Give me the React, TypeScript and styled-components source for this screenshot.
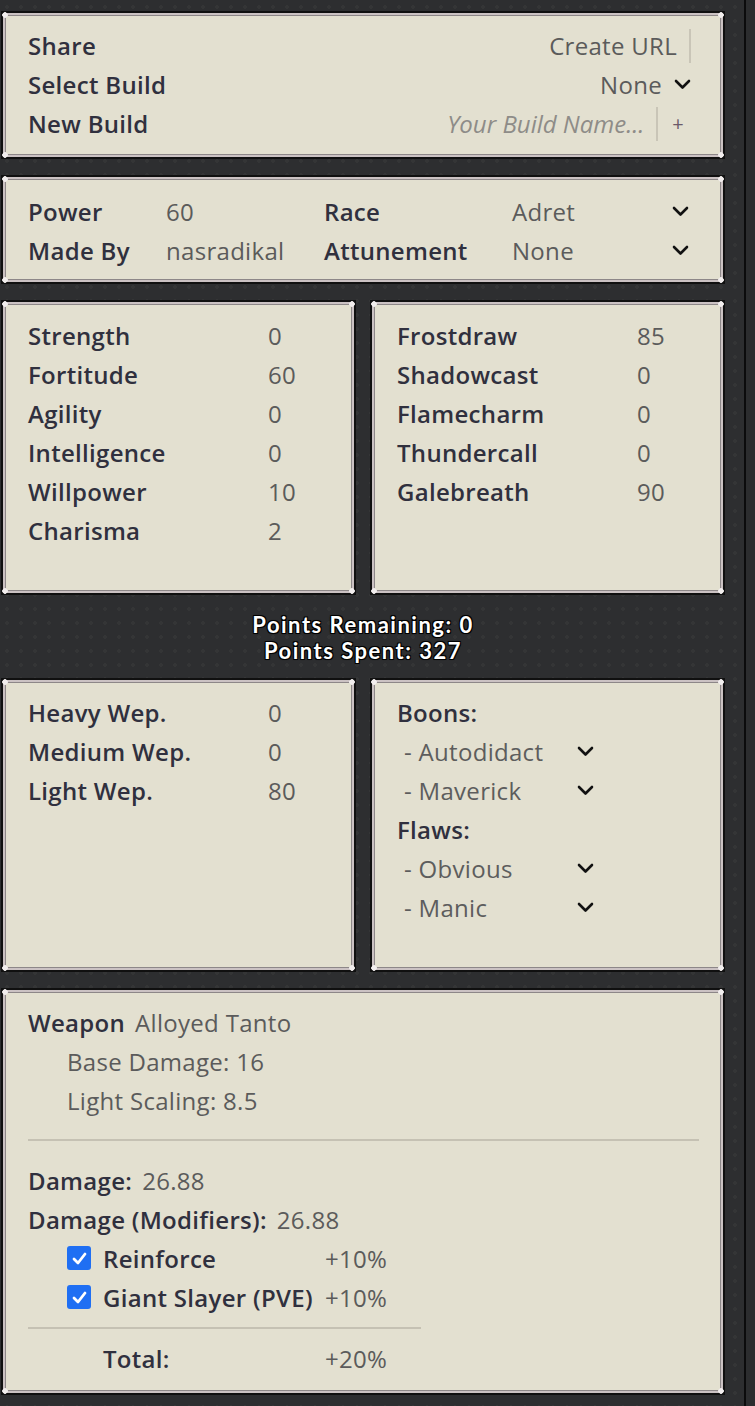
import React from 'react';
import styled, { createGlobalStyle } from 'styled-components';

const GlobalStyle = createGlobalStyle`
  body {
    margin: 0;
    background: #2c2d2f;
    font-family: 'Open Sans', 'Noto Sans', sans-serif;
  }
`;

const Page = styled.div`
  width: 746px;
  min-height: 1406px;
  box-sizing: border-box;
  padding: 13px 0 0 3px;
  border-right: 2px solid #0b0b0c;
  background:
    radial-gradient(circle at 50% 50%, rgba(255, 255, 255, 0.03) 20%, transparent 21%) 0 0 / 14px 14px,
    #2d2e30;
`;

const Column = styled.div`
  width: 720px;
  display: flex;
  flex-direction: column;
  gap: 20px;
`;

const Panel = styled.div<{ $minHeight?: number; $pt?: number; $pb?: number }>`
  position: relative;
  box-sizing: border-box;
  background: #e3e0d0;
  border: 2px solid #cbc2c3;
  box-shadow: 0 0 0 2px #101010, inset 0 0 0 1px #8d8788;
  padding: ${(p) => p.$pt ?? 12}px 22px ${(p) => p.$pb ?? 12}px 23px;
  min-height: ${(p) => (p.$minHeight ? `${p.$minHeight}px` : 'auto')};
  font-size: 24px;
  line-height: 39px;
  letter-spacing: 0.3px;
  &::before {
    content: '';
    position: absolute;
    inset: -5px;
    pointer-events: none;
    background:
      radial-gradient(circle, #f2eeee 0 2.5px, transparent 3px) 0 0 / 10px 10px no-repeat,
      radial-gradient(circle, #f2eeee 0 2.5px, transparent 3px) 100% 0 / 10px 10px no-repeat,
      radial-gradient(circle, #f2eeee 0 2.5px, transparent 3px) 0 100% / 10px 10px no-repeat,
      radial-gradient(circle, #f2eeee 0 2.5px, transparent 3px) 100% 100% / 10px 10px no-repeat;
  }
`;

const Pair = styled.div`
  display: grid;
  grid-template-columns: 351px 351px;
  column-gap: 18px;
`;

const Label = styled.span`
  font-weight: 600;
  color: #30303e;
  white-space: nowrap;
`;

const Value = styled.span`
  color: #5b5b5b;
  white-space: nowrap;
`;

/* share panel */
const ShareRow = styled.div`
  display: flex;
  align-items: center;
  justify-content: space-between;
  height: 39px;
`;

const RightGroup = styled.div`
  display: flex;
  align-items: center;
  gap: 12px;
  padding-right: 8px;
`;

const Divider = styled.span`
  display: block;
  width: 2px;
  height: 34px;
  background: #c9c5b7;
`;

const Placeholder = styled.span`
  font-style: italic;
  color: #8e8c88;
  letter-spacing: 0;
`;

const Plus = styled.span`
  color: #6b5a6a;
  font-size: 20px;
  margin: 0 7px 0 2px;
`;

/* info panel */
const InfoGrid = styled.div`
  display: grid;
  grid-template-columns: 138px 158px 188px 1fr 27px;
  align-items: center;
`;

/* stats */
const StatRow = styled.div`
  display: grid;
  grid-template-columns: 240px 1fr;
`;

const PointsBox = styled.div`
  text-align: center;
  color: #fff;
  font-family: Lato, 'Open Sans', sans-serif;
  font-weight: 700;
  font-size: 22px;
  line-height: 26.4px;
  letter-spacing: 1.5px;
  margin: -1px 0 -5px;
  text-shadow: -1px -1px 0 #000, 1px -1px 0 #000, -1px 1px 0 #000, 1px 1px 0 #000, 0 0 2px #000;
`;

const TraitItem = styled.div`
  display: grid;
  grid-template-columns: 173px 20px;
  align-items: center;
  padding-left: 7px;
  color: #5d5d5d;
`;

/* weapon panel */
const InlineRow = styled.div<{ $indent?: number }>`
  display: flex;
  gap: 10px;
  padding-left: ${(p) => p.$indent || 0}px;
`;

const Rule = styled.hr<{ $width?: number; $mt: number; $mb: number }>`
  border: none;
  height: 2px;
  background: #c5c1b3;
  margin: ${(p) => p.$mt}px 0 ${(p) => p.$mb}px;
  width: ${(p) => (p.$width ? `${p.$width}px` : '100%')};
`;

const ModRow = styled.div`
  display: grid;
  grid-template-columns: 36px 222px 1fr;
  align-items: center;
  padding-left: 39px;
`;

const Check = styled.span`
  display: flex;
  align-items: center;
  justify-content: center;
  width: 24px;
  height: 24px;
  border-radius: 3px;
  background: #1f6ff3;
`;

const Chevron = () => (
  <svg width="17" height="11" viewBox="0 0 17 11">
    <polyline points="2,2 8.5,8.5 15,2" fill="none" stroke="#111" strokeWidth="2.6" strokeLinecap="round" strokeLinejoin="round" />
  </svg>
);

const CheckMark = () => (
  <svg width="17" height="17" viewBox="0 0 17 17">
    <polyline points="3,9 7,13 14,4" fill="none" stroke="#fff" strokeWidth="2.8" strokeLinecap="round" strokeLinejoin="round" />
  </svg>
);

const stats = [
  ['Strength', '0'],
  ['Fortitude', '60'],
  ['Agility', '0'],
  ['Intelligence', '0'],
  ['Willpower', '10'],
  ['Charisma', '2'],
];

const attunements = [
  ['Frostdraw', '85'],
  ['Shadowcast', '0'],
  ['Flamecharm', '0'],
  ['Thundercall', '0'],
  ['Galebreath', '90'],
];

const weapons = [
  ['Heavy Wep.', '0'],
  ['Medium Wep.', '0'],
  ['Light Wep.', '80'],
];

const mods = [
  ['Reinforce', '+10%'],
  ['Giant Slayer (PVE)', '+10%'],
];

export default function App() {
  return (
    <>
      <GlobalStyle />
      <Page>
        <Column>
          <Panel $pt={11} $pb={12}>
            <ShareRow>
              <Label>Share</Label>
              <RightGroup>
                <Value>Create URL</Value>
                <Divider />
              </RightGroup>
            </ShareRow>
            <ShareRow>
              <Label>Select Build</Label>
              <RightGroup>
                <Value>None</Value>
                <Chevron />
              </RightGroup>
            </ShareRow>
            <ShareRow>
              <Label>New Build</Label>
              <RightGroup>
                <Placeholder>Your Build Name...</Placeholder>
                <Divider />
                <Plus>+</Plus>
              </RightGroup>
            </ShareRow>
          </Panel>

          <Panel $pt={13} $pb={10}>
            <InfoGrid>
              <Label>Power</Label>
              <Value>60</Value>
              <Label>Race</Label>
              <Value>Adret</Value>
              <Chevron />
              <Label>Made By</Label>
              <Value>nasradikal</Value>
              <Label>Attunement</Label>
              <Value>None</Value>
              <Chevron />
            </InfoGrid>
          </Panel>

          <Pair>
            <Panel $minHeight={291}>
              {stats.map(([name, val]) => (
                <StatRow key={name}>
                  <Label>{name}</Label>
                  <Value>{val}</Value>
                </StatRow>
              ))}
            </Panel>
            <Panel $minHeight={291}>
              {attunements.map(([name, val]) => (
                <StatRow key={name}>
                  <Label>{name}</Label>
                  <Value>{val}</Value>
                </StatRow>
              ))}
            </Panel>
          </Pair>

          <PointsBox>
            <div>Points Remaining: 0</div>
            <div>Points Spent: 327</div>
          </PointsBox>

          <Pair>
            <Panel $minHeight={290} $pt={11}>
              {weapons.map(([name, val]) => (
                <StatRow key={name}>
                  <Label>{name}</Label>
                  <Value>{val}</Value>
                </StatRow>
              ))}
            </Panel>
            <Panel $minHeight={290} $pt={11}>
              <Label>Boons:</Label>
              {['Autodidact', 'Maverick'].map((b) => (
                <TraitItem key={b}>
                  <span>- {b}</span>
                  <Chevron />
                </TraitItem>
              ))}
              <Label>Flaws:</Label>
              {['Obvious', 'Manic'].map((f) => (
                <TraitItem key={f}>
                  <span>- {f}</span>
                  <Chevron />
                </TraitItem>
              ))}
            </Panel>
          </Pair>

          <Panel $minHeight={403} $pt={11}>
            <InlineRow>
              <Label>Weapon</Label>
              <Value>Alloyed Tanto</Value>
            </InlineRow>
            <InlineRow $indent={39}>
              <Value>Base Damage: 16</Value>
            </InlineRow>
            <InlineRow $indent={39}>
              <Value>Light Scaling: 8.5</Value>
            </InlineRow>
            <Rule $mt={19} $mb={20} />
            <InlineRow>
              <Label>Damage:</Label>
              <Value>26.88</Value>
            </InlineRow>
            <InlineRow>
              <Label>Damage (Modifiers):</Label>
              <Value>26.88</Value>
            </InlineRow>
            {mods.map(([name, pct]) => (
              <ModRow key={name}>
                <Check>
                  <CheckMark />
                </Check>
                <Label>{name}</Label>
                <Value>{pct}</Value>
              </ModRow>
            ))}
            <Rule $mt={10} $mb={10} $width={393} />
            <ModRow>
              <span />
              <Label>Total:</Label>
              <Value>+20%</Value>
            </ModRow>
          </Panel>
        </Column>
      </Page>
    </>
  );
}
